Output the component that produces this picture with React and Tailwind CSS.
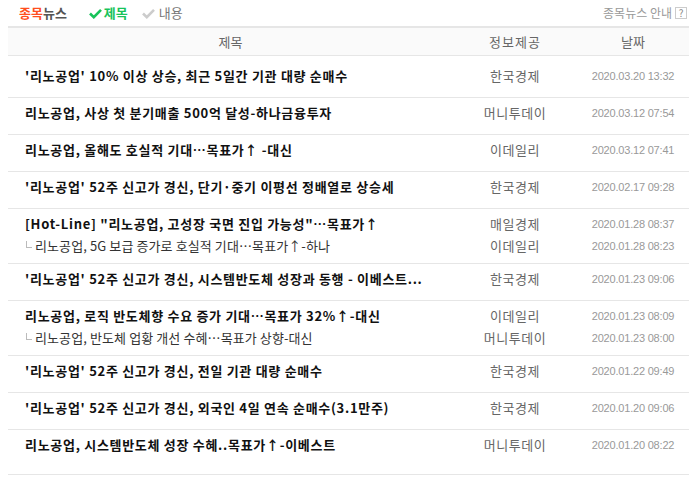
import React from "react";

const rows = [
  { title: "'리노공업' 10% 이상 상승, 최근 5일간 기관 대량 순매수", src: "한국경제", date: "2020.03.20 13:32", first: true },
  { title: "리노공업, 사상 첫 분기매출 500억 달성-하나금융투자", src: "머니투데이", date: "2020.03.12 07:54" },
  { title: "리노공업, 올해도 호실적 기대…목표가↑ -대신", src: "이데일리", date: "2020.03.12 07:41" },
  { title: "'리노공업' 52주 신고가 경신, 단기·중기 이평선 정배열로 상승세", src: "한국경제", date: "2020.02.17 09:28" },
  {
    title: "[Hot-Line] \"리노공업, 고성장 국면 진입 가능성\"…목표가↑",
    src: "매일경제",
    date: "2020.01.28 08:37",
    sub: { title: "리노공업, 5G 보급 증가로 호실적 기대…목표가↑-하나", src: "이데일리", date: "2020.01.28 08:23" },
  },
  { title: "'리노공업' 52주 신고가 경신, 시스템반도체 성장과 동행 - 이베스트...", src: "한국경제", date: "2020.01.23 09:06" },
  {
    title: "리노공업, 로직 반도체향 수요 증가 기대…목표가 32%↑-대신",
    src: "이데일리",
    date: "2020.01.23 08:09",
    sub: { title: "리노공업, 반도체 업황 개선 수혜…목표가 상향-대신", src: "머니투데이", date: "2020.01.23 08:00" },
  },
  { title: "'리노공업' 52주 신고가 경신, 전일 기관 대량 순매수", src: "한국경제", date: "2020.01.22 09:49" },
  { title: "'리노공업' 52주 신고가 경신, 외국인 4일 연속 순매수(3.1만주)", src: "한국경제", date: "2020.01.20 09:06" },
  { title: "리노공업, 시스템반도체 성장 수혜..목표가↑-이베스트", src: "머니투데이", date: "2020.01.20 08:22", last: true },
];

const Check = ({ color }) => (
  <svg width="13" height="11" viewBox="0 0 13 11">
    <path d="M1 5.5 L4.8 9.2 L12 1.8" fill="none" stroke={color} strokeWidth="2.6" />
  </svg>
);

const Line = ({ title, src, date, sub }) => (
  <div className="flex h-[22px] items-center leading-[22px]">
    <div className="flex-1 pl-[17px] flex items-center">
      {sub ? (
        <>
          <span className="w-[10px] h-[22px] flex items-start pt-[6px] pl-[1px]">
            <span className="block w-[6px] h-[7px] border-l border-b border-[#bbb]" />
          </span>
          <span className="text-[#333] text-[13px] tracking-[0.1px]">{title}</span>
        </>
      ) : (
        <span className="text-[#111] text-[13px] font-bold tracking-[0.7px]">{title}</span>
      )}
    </div>
    <div className="w-[124px] text-center text-[#666] text-[13px] tracking-[0.5px]">{src}</div>
    <div className="w-[112px] text-center text-[#999] text-[11px] font-['Liberation_Sans',sans-serif] tracking-[-0.2px]">
      {date}
    </div>
  </div>
);

const pad = (r) => {
  if (r.first) return "pt-[9px] pb-[10px]";
  if (r.last) return "pt-[4px] pb-[18px]";
  if (r.sub) return "pt-[4px] pb-[6px]";
  return "pt-[4px] pb-[10px]";
};

export default function App() {
  return (
    <div className="w-[689px] h-[477px] bg-white font-['Noto_Sans_CJK_KR',sans-serif] overflow-hidden">
      <div className="flex h-[26px] items-center pl-[19px] pr-[2px]">
        <div className="text-[13px] font-bold">
          <span className="text-[#ff4f1f]">종목</span>
          <span className="text-[#555]">뉴스</span>
        </div>
        <div className="flex items-center ml-[22px] gap-[2px]">
          <Check color="#17c35a" />
          <span className="text-[13px] font-bold text-[#17c35a]">제목</span>
        </div>
        <div className="flex items-center ml-[14px] gap-[4px]">
          <Check color="#cccccc" />
          <span className="text-[13px] text-[#777]">내용</span>
        </div>
        <div className="ml-auto flex items-center gap-[3px] text-[12px] text-[#999]">
          <span>종목뉴스 안내</span>
          <span className="w-[12px] h-[12px] border border-[#ccc] text-[10px] leading-[10px] text-center text-[#888]">?</span>
        </div>
      </div>
      <div className="ml-[8px] border-t-2 border-[#e6e6e6]">
        <div className="flex h-[28px] items-center bg-[#fafafa] border-b border-[#e6e6e6] text-[13px] text-[#666]">
          <div className="flex-1 text-center">제목</div>
          <div className="w-[124px] text-center tracking-[1px]">정보제공</div>
          <div className="w-[112px] text-center">날짜</div>
        </div>
        {rows.map((r, i) => (
          <div key={i} className={`border-b border-[#e6e6e6] ${pad(r)}`}>
            <Line title={r.title} src={r.src} date={r.date} />
            {r.sub && <Line {...r.sub} sub />}
          </div>
        ))}
      </div>
    </div>
  );
}
